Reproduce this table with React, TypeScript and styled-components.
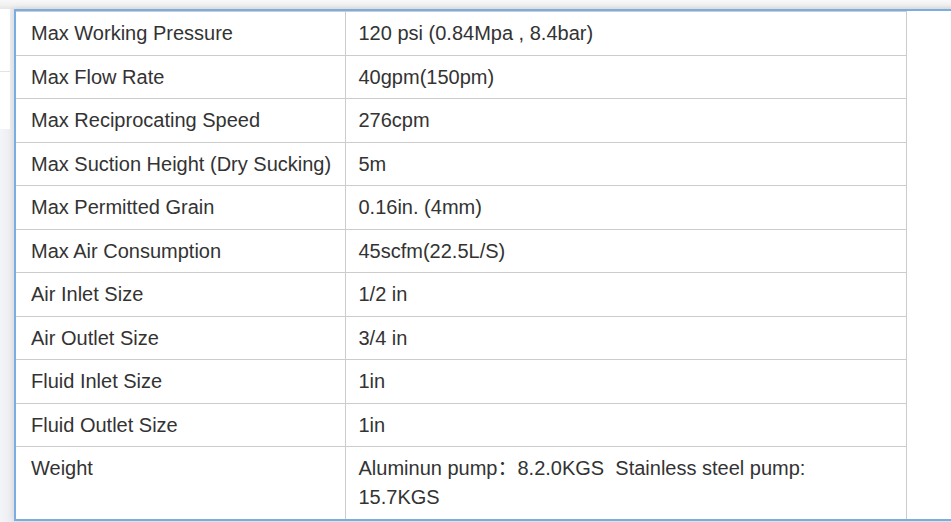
import React from "react";
import styled, { createGlobalStyle } from "styled-components";

const Global = createGlobalStyle`
  html, body { margin: 0; padding: 0; }
  body {
    background: #f1f2f5;
    font-family: "Liberation Sans", Arial, "Noto Sans CJK SC", sans-serif;
    overflow: hidden;
  }
`;

const Page = styled.div`
  width: 951px;
  height: 522px;
  display: flex;
  flex-direction: column;
  background: linear-gradient(90deg, #f4f5f8 0px, #e9ebef 14px);
  overflow: hidden;
`;

const TopShade = styled.div`
  height: 9px;
  flex: none;
  background: linear-gradient(180deg, #f8f8f8 0%, #f0f0f0 60%, #e6e6e6 100%);
`;

const Body = styled.div`
  display: flex;
  flex: 1;
  min-height: 0;
`;

const Side = styled.div`
  width: 14px;
  flex: none;
  display: flex;
  flex-direction: column;
  align-items: flex-start;
`;

const SideCard = styled.div`
  width: 10px;
  background: #ffffff;
  display: flex;
  flex-direction: column;
`;

const SideItem = styled.div<{ $h: number; $line?: boolean }>`
  height: ${(p) => p.$h}px;
  border-bottom: ${(p) => (p.$line ? "1px solid #e3e3e3" : "none")};
`;

const Frame = styled.div`
  flex: 1;
  margin-right: -10px;
  border: 2px solid #7aaee2;
  border-right: none;
  background: #ffffff;
  box-shadow: 0 0 7px rgba(0, 0, 0, 0.1);
  align-self: flex-start;
`;

const Table = styled.table`
  border-collapse: collapse;
  width: 891px;
  table-layout: fixed;
  color: #333333;
  font-size: 20px;
  line-height: 29px;
`;

const Row = styled.tr`
  border-top: 1px solid #cccccc;
  &:last-child td { padding-bottom: 6.5px; }
`;

const Cell = styled.td<{ $key?: boolean }>`
  vertical-align: top;
  padding: 7px ${(p) => (p.$key ? "10px" : "20px")} 6.5px ${(p) => (p.$key ? "15px" : "13px")};
  border-right: 1px solid #cccccc;
  width: ${(p) => (p.$key ? "329px" : "auto")};
  box-sizing: border-box;
  white-space: nowrap;
  &:last-child { white-space: normal; }
`;

const rows: [string, string][] = [
  ["Max Working Pressure", "120 psi (0.84Mpa , 8.4bar)"],
  ["Max Flow Rate", "40gpm(150pm)"],
  ["Max Reciprocating Speed", "276cpm"],
  ["Max Suction Height (Dry Sucking)", "5m"],
  ["Max Permitted Grain", "0.16in. (4mm)"],
  ["Max Air Consumption", "45scfm(22.5L/S)"],
  ["Air Inlet Size", "1/2 in"],
  ["Air Outlet Size", "3/4 in"],
  ["Fluid Inlet Size", "1in"],
  ["Fluid Outlet Size", "1in"],
  ["Weight", "Aluminun pump\uFF1A8.2.0KGS\u00A0 Stainless steel pump: 15.7KGS"],
];

export default function App() {
  return (
    <Page>
      <Global />
      <TopShade />
      <Body>
        <Side>
          <SideCard>
            <SideItem $h={62} $line />
            <SideItem $h={57} />
          </SideCard>
        </Side>
        <Frame>
          <Table>
            <tbody>
              {rows.map(([k, v]) => (
                <Row key={k}>
                  <Cell $key>{k}</Cell>
                  <Cell>{v}</Cell>
                </Row>
              ))}
            </tbody>
          </Table>
        </Frame>
      </Body>
    </Page>
  );
}
